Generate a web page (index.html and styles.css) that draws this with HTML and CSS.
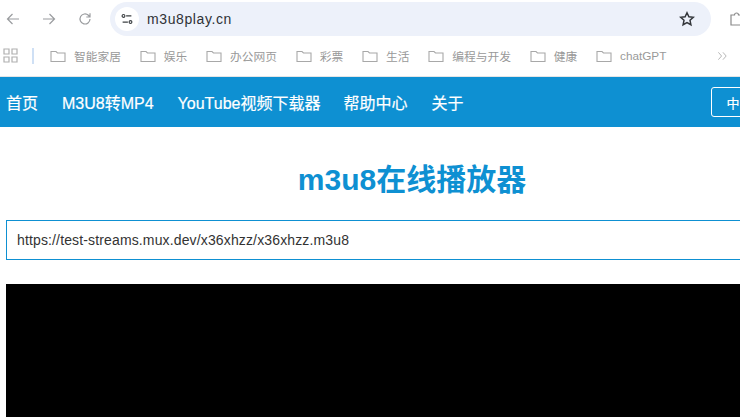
FILE: index.html
```html
<!DOCTYPE html>
<html lang="zh-CN">
<head>
  <meta charset="UTF-8" />
  <meta name="viewport" content="width=device-width, initial-scale=1.0"/>
  <title>m3u8在线播放器</title>
  <link rel="stylesheet" href="styles.css">
</head>
<body>

  <div class="toolbar">
    <svg class="tool-icon" viewBox="0 0 16 16"><path d="M14 8H2.500M7.500 3l-5 5 5 5"/></svg>
    <svg class="tool-icon forward" viewBox="0 0 16 16"><path d="M2 8h11.500M8.500 3l5 5-5 5"/></svg>
    <svg class="tool-icon reload" viewBox="0 0 16 16"><path d="M13 8a5 5 0 1 1-1.600-3.700L13 6M13 2.200V6H9.300"/></svg>
    <div class="omnibox">
      <span class="site-badge">
        <svg viewBox="0 0 16 16"><path d="M7 4.500h6M3 11.500h6"/><circle cx="4" cy="4.500" r="1.600"/><circle cx="12" cy="11.500" r="1.600"/></svg>
      </span>
      <span class="url">m3u8play.cn</span>
      <svg class="star" viewBox="0 0 16 16"><path d="M8 1.800l1.900 4 4.400.5-3.300 3 .9 4.400L8 11.500l-3.900 2.200.9-4.400-3.300-3 4.400-.5z"/></svg>
    </div>
    <svg class="ext-icon" viewBox="0 0 16 16"><path d="M2 4h3.500a2 2 0 0 1 4 0H13v3a2 2 0 0 1 0 4v3H2z"/></svg>
  </div>

  <div class="bookmarks">
    <svg class="apps" viewBox="0 0 15 15"><path d="M1 1h5v5H1zM9 1h5v5H9zM1 9h5v5H1zM9 9h5v5H9z"/></svg>
    <span class="divider"></span>
    <a class="bm bm-1"><svg viewBox="0 0 16 14"><path d="M1 2.500h5l1.500 1.500h7.500v8.500H1z"/></svg>智能家居</a>
    <a class="bm"><svg viewBox="0 0 16 14"><path d="M1 2.500h5l1.500 1.500h7.500v8.500H1z"/></svg>娱乐</a>
    <a class="bm"><svg viewBox="0 0 16 14"><path d="M1 2.500h5l1.500 1.500h7.500v8.500H1z"/></svg>办公网页</a>
    <a class="bm"><svg viewBox="0 0 16 14"><path d="M1 2.500h5l1.500 1.500h7.500v8.500H1z"/></svg>彩票</a>
    <a class="bm"><svg viewBox="0 0 16 14"><path d="M1 2.500h5l1.500 1.500h7.500v8.500H1z"/></svg>生活</a>
    <a class="bm"><svg viewBox="0 0 16 14"><path d="M1 2.500h5l1.500 1.500h7.500v8.500H1z"/></svg>编程与开发</a>
    <a class="bm"><svg viewBox="0 0 16 14"><path d="M1 2.500h5l1.500 1.500h7.500v8.500H1z"/></svg>健康</a>
    <a class="bm"><svg viewBox="0 0 16 14"><path d="M1 2.500h5l1.500 1.500h7.500v8.500H1z"/></svg>chatGPT</a>
    <svg class="more" viewBox="0 0 12 10"><path d="M1.500 1l3.500 4-3.500 4M6.500 1l3.500 4-3.500 4"/></svg>
  </div>

  <div class="page">
    <nav class="site-nav">
      <a>首页</a>
      <a>M3U8转MP4</a>
      <a class="tight">YouTube视频下载器</a>
      <a>帮助中心</a>
      <a>关于</a>
      <button class="lang">中</button>
    </nav>

    <main class="content">
      <h1>m3u8在线播放器</h1>
      <input class="url-input" type="text" value="https://test-streams.mux.dev/x36xhzz/x36xhzz.m3u8" />
      <div class="player"></div>
    </main>
  </div>

</body>
</html>
```

FILE: styles.css
```css
html, body {
  height: 100%;
}

body {
  margin: 0;
  overflow: hidden;
  background-color: #fff;
  font-family: "Liberation Sans", "Noto Sans CJK SC", sans-serif;
}

svg {
  flex-shrink: 0;
  fill: none;
}

.toolbar {
  display: flex;
  align-items: center;
  height: 38px;
  padding-left: 5px;
}

.tool-icon {
  width: 16px;
  height: 16px;
  stroke: #9a9c9f;
  stroke-width: 1.2;
}

.forward {
  margin-left: 20px;
}

.reload {
  margin-left: 20px;
}

.omnibox {
  display: flex;
  align-items: center;
  flex-shrink: 0;
  width: 601px;
  height: 34px;
  margin-left: 17px;
  padding: 0 16px 0 5px;
  box-sizing: border-box;
  background-color: #edf1fa;
  border-radius: 17px;
}

.site-badge {
  display: flex;
  align-items: center;
  justify-content: center;
  width: 24px;
  height: 24px;
  background-color: #fff;
  border-radius: 50%;
}

.site-badge svg {
  width: 14px;
  height: 14px;
  stroke: #3c4043;
  stroke-width: 1.3;
}

.url {
  flex-grow: 1;
  margin-left: 8px;
  font-size: 14px;
  color: #2f3236;
  letter-spacing: 0.6px;
}

.star {
  width: 16px;
  height: 16px;
  stroke: #33363a;
  stroke-width: 1.5;
}

.ext-icon {
  width: 16px;
  height: 16px;
  margin-left: 18px;
  stroke: #8a8a8a;
  stroke-width: 1.2;
}

.bookmarks {
  display: flex;
  align-items: center;
  height: 35px;
  padding-left: 3px;
  padding-bottom: 3px;
  border-bottom: 1px solid #e3e5e6;
  font-size: 11.75px;
  color: #999;
}

.apps {
  width: 15px;
  height: 15px;
  stroke: #b0b0b0;
  stroke-width: 1.2;
}

.divider {
  width: 2px;
  height: 16px;
  margin-left: 14px;
  background-color: #cfe0f5;
}

.bm {
  display: flex;
  align-items: center;
  gap: 8px;
  margin-left: 18.75px;
  white-space: nowrap;
}

.bm-1 {
  margin-left: 16px;
}

.bm svg {
  width: 16px;
  height: 14px;
  stroke: #a8a8a8;
  stroke-width: 1.1;
}

.more {
  width: 11px;
  height: 10px;
  margin-left: 51px;
  stroke: #b0b0b0;
  stroke-width: 1;
}

.page {
  width: 824px;
}

.site-nav {
  display: flex;
  align-items: center;
  height: 50px;
  padding-left: 6px;
  background-color: #0e90d2;
  font-size: 16px;
  color: #fff;
  -webkit-text-stroke: 0.2px #fff;
}

.site-nav a {
  margin-right: 24px;
  white-space: nowrap;
}

.site-nav a.tight {
  margin-right: 23px;
}

.lang {
  width: 70px;
  height: 30px;
  margin-left: 223px;
  padding: 0 15px;
  background: transparent;
  border: 1px solid #fff;
  border-radius: 3px;
  font-family: inherit;
  font-size: 13px;
  text-align: left;
  color: #fff;
}

.content {
  padding: 0 6px;
}

.content h1 {
  margin: 36px 0 0;
  text-align: center;
  font-size: 30px;
  line-height: 34px;
  font-weight: bold;
  color: #0e90d2;
}

.url-input {
  display: block;
  width: 100%;
  height: 40px;
  margin-top: 23px;
  padding: 0 10px;
  box-sizing: border-box;
  border: 1px solid #0e90d2;
  font-family: inherit;
  font-size: 14px;
  letter-spacing: 0.14px;
  color: #333;
}

.player {
  height: 400px;
  margin-top: 24px;
  background-color: #000;
}
```
